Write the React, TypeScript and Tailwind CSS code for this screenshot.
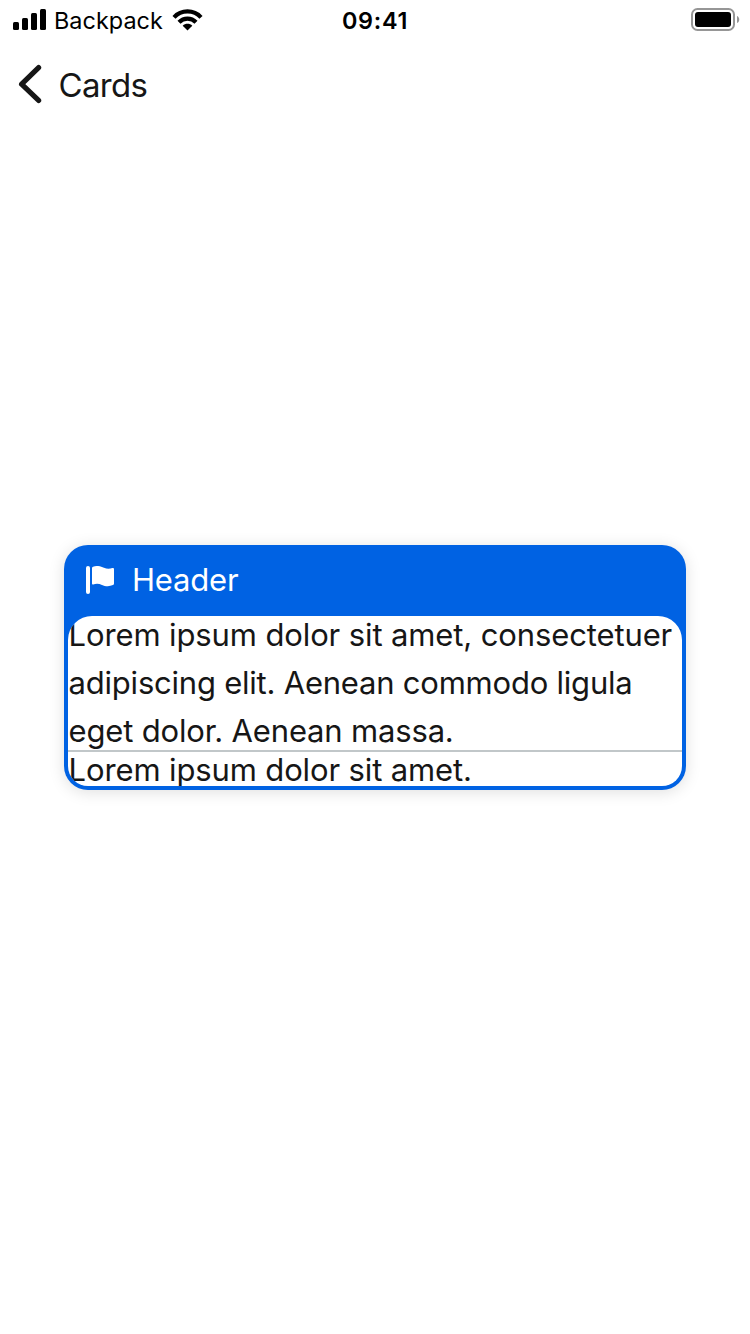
import React from "react";

function StatusBar() {
  return (
    <header className="grid h-10 grid-cols-3 items-center text-black">
      <div className="flex items-center pl-[13px]">
        <svg width="33" height="22" viewBox="0 0 33 22" fill="currentColor">
          <rect x="0" y="13" width="6" height="8" rx="1.5" />
          <rect x="9" y="9" width="6" height="12" rx="1.5" />
          <rect x="18" y="4" width="6" height="17" rx="1.5" />
          <rect x="27" y="0" width="6" height="21" rx="1.5" />
        </svg>
        <span className="ml-2 w-[110px] whitespace-nowrap pt-0.5 text-[23.4px] leading-[38px] tracking-[0.05px]">Backpack</span>
        <svg className="ml-2" width="31" height="24" viewBox="0 0 31 24" fill="none" stroke="currentColor" strokeWidth="4.2">
          <path d="M2 9.3C9.2 1.5 21.8 1.5 29 9.3" />
          <path d="M7 14.3C11.7 9.4 19.3 9.4 24 14.3" />
          <path d="M15.5 22.5L10.7 17.7C13.3 15.2 17.7 15.2 20.3 17.7Z" fill="currentColor" stroke="none" />
        </svg>
      </div>
      <span className="pt-0.5 text-center text-[23.4px] font-semibold leading-[38px] tracking-[0.7px]">09:41</span>
      <svg className="justify-self-end" width="59" height="24" viewBox="0 0 59 24">
        <rect x="1" y="1" width="42" height="21" rx="5.5" fill="none" stroke="#969696" strokeWidth="2" />
        <rect x="4" y="4" width="36" height="15" rx="3" fill="black" />
        <path d="M46 8C49 9 49 14 46 15Z" fill="#969696" />
      </svg>
    </header>
  );
}

export default function App() {
  return (
    <main className="flex h-[1334px] w-[750px] flex-col overflow-hidden bg-white font-['Inter',sans-serif] text-[#161616]">
      <StatusBar />
      <nav className="flex h-[88px] items-center pl-[18px]">
        <svg width="24" height="40" viewBox="0 0 24 40" fill="none" stroke="currentColor" strokeWidth="5.2" strokeLinecap="round" strokeLinejoin="round">
          <path d="M20.6 3.6L3.6 20.2L20.6 36.4" />
        </svg>
        <h1 className="ml-[16.5px] pt-px text-[33px] leading-[38px] tracking-[-0.7px]">Cards</h1>
      </nav>
      <section className="mx-16 mt-[417px] flex h-[245px] flex-col rounded-[24px] bg-[#0062e3] px-1 pb-1 shadow-[0_2px_16px_rgba(0,0,0,0.13)]">
        <div className="flex h-[70px] items-center pl-[18px] text-white">
          <svg width="28" height="28" viewBox="0 0 28 28" fill="currentColor">
            <rect x="0" y="0" width="4" height="28" rx="2" />
            <path d="M6 2.2Q6 1.2 7 .8C12-1 15 .5 18 1.8C21 3 24 2.8 26.3 2Q28 1.5 28 3V17.5Q28 18.6 27 19C23 20.8 19 20.2 16 18.9C13 17.5 10 17.5 7.2 18.4Q6 18.8 6 17.5Z" />
          </svg>
          <h2 className="ml-[18px] text-[31px] leading-[40px] tracking-[-0.2px]">Header</h2>
        </div>
        <div className="mt-px flex h-[170px] flex-col overflow-hidden rounded-t-[24px] rounded-b-[20px] bg-white text-[31px]">
          <p className="-mt-[5px] h-[139px] shrink-0 whitespace-nowrap pl-[0.6px] leading-[48px]">
            <span className="block tracking-[-0.12px]">Lorem ipsum dolor sit amet, consectetuer</span>
            <span className="block tracking-[-0.22px]">adipiscing elit. Aenean commodo ligula</span>
            <span className="block tracking-[-0.17px]">eget dolor. Aenean massa.</span>
          </p>
          <div className="h-0.5 shrink-0 bg-[#c1c7c9]" />
          <p className="h-[34px] pl-[0.6px] leading-[35px] tracking-[-0.13px]">Lorem ipsum dolor sit amet.</p>
        </div>
      </section>
    </main>
  );
}
